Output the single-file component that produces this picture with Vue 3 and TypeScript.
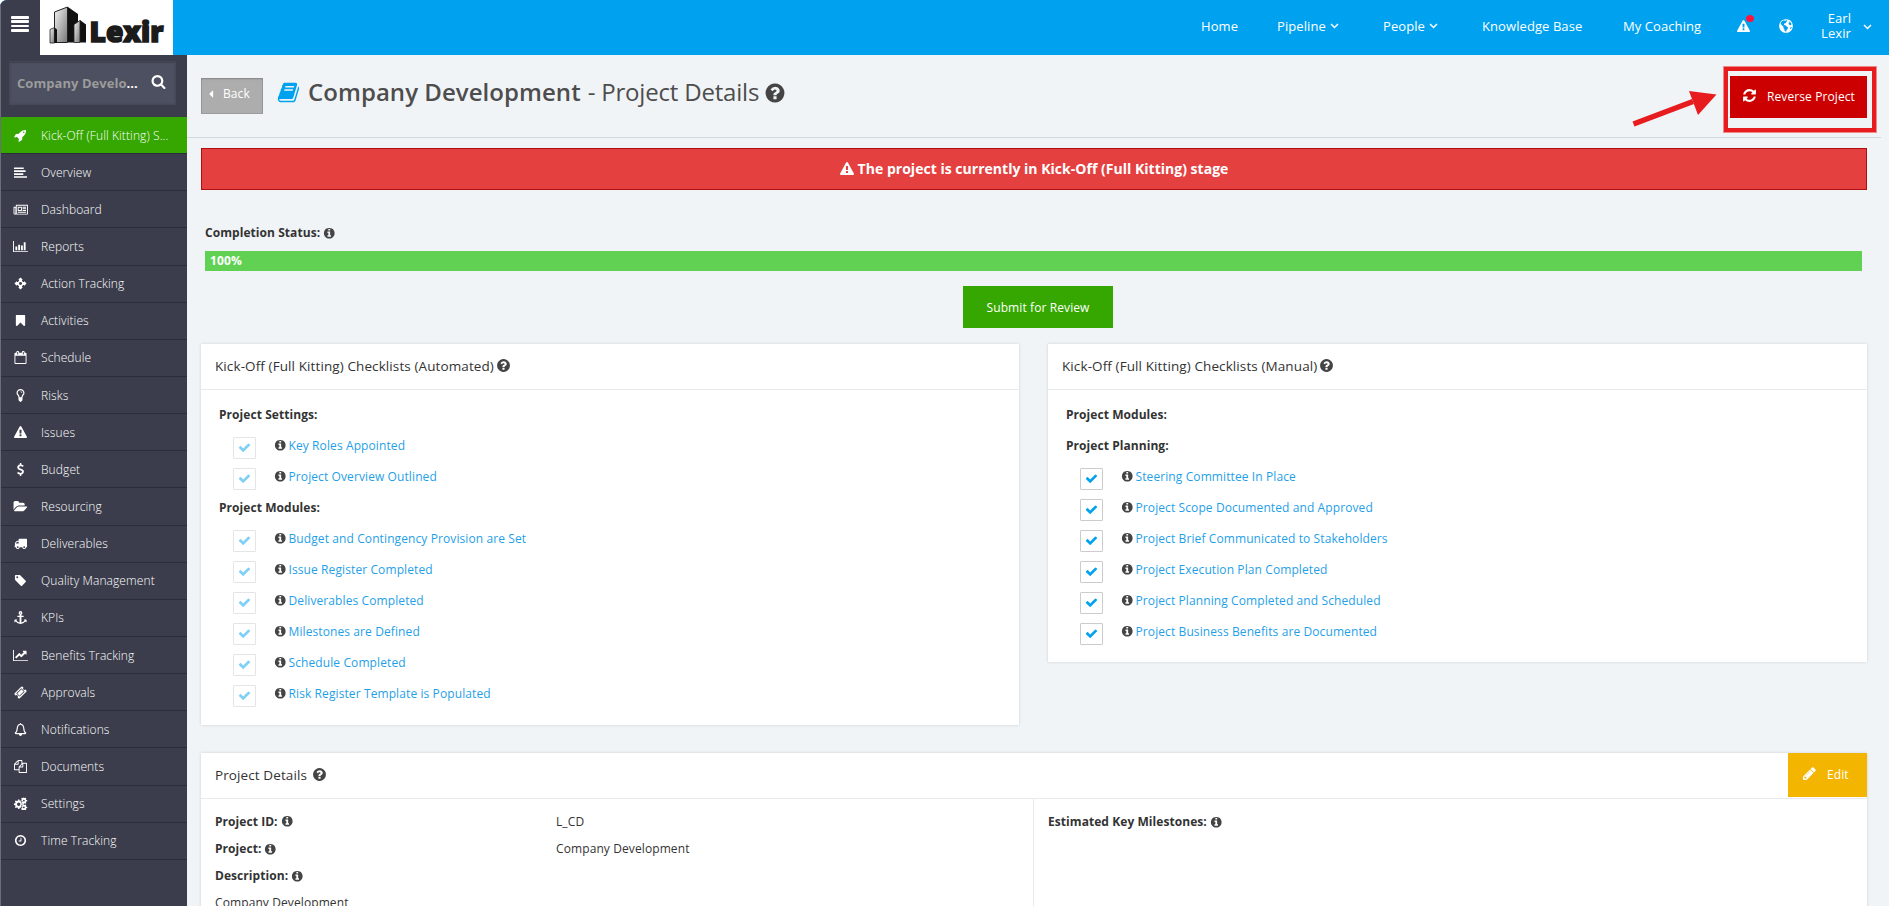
<script setup lang="ts">
interface NavEntry { label: string; icon: string; active?: boolean }
interface CheckItem { heading?: boolean; label: string }

const circle = 'M1664 896q0 209-103 385.5t-279.5 279.5-385.5 103-385.5-103-279.5-279.5-103-385.5 103-385.5 279.5-279.5 385.5-103 385.5 103 279.5 279.5 103 385.5z'

const icons: Record<string, string> = {
  check: 'M1671 566q0 40-28 68l-724 724-136 136q-28 28-68 28t-68-28l-136-136-362-362q-28-28-28-68t28-68l136-136q28-28 68-28t68 28l294 295 656-657q28-28 68-28t68 28l136 136q28 28 28 68z',
  info: 'M1152 1376v-160q0-14-9-23t-23-9h-96v-512q0-14-9-23t-23-9h-320q-14 0-23 9t-9 23v160q0 14 9 23t23 9h96v320h-96q-14 0-23 9t-9 23v160q0 14 9 23t23 9h448q14 0 23-9t9-23zm-128-896v-160q0-14-9-23t-23-9h-192q-14 0-23 9t-9 23v160q0 14 9 23t23 9h192q14 0 23-9t9-23z' + circle,
  question: 'M1024 1376v-192q0-14-9-23t-23-9h-192q-14 0-23 9t-9 23v192q0 14 9 23t23 9h192q14 0 23-9t9-23zm256-672q0-88-55.5-163t-138.5-116-170-41q-243 0-371 213-15 24 8 42l132 100q7 6 19 6 16 0 25-12 53-68 86-92 34-24 86-24 48 0 85.5 26t37.5 59q0 38-20 61t-68 45q-63 28-115.5 86.5t-52.5 125.5v36q0 14 9 23t23 9h192q14 0 23-9t9-23q0-19 21.5-49.5t54.5-49.5q32-18 49-28.5t46-35 44.5-48 28-60.5 12.5-81z' + circle,
  warning: 'M1024 1375v-190q0-14-9.5-23.5t-22.5-9.5h-192q-13 0-22.5 9.5t-9.5 23.5v190q0 14 9.5 23.5t22.5 9.5h192q13 0 22.5-9.5t9.5-23.5zm-2-374l18-459q0-12-10-19-13-11-24-11h-220q-11 0-24 11-10 7-10 21l17 457q0 10 10 16.5t24 6.5h185q14 0 23.5-6.5t10.5-16.5zm-14-934l768 1408q35 63-2 126-17 29-46.5 46t-63.5 17h-1536q-34 0-63.5-17t-46.5-46q-37-63-2-126l768-1408q17-31 47-49t65-18 65 18 47 49z',
  refresh: 'M1639 1056q0 5-1 7-64 268-268 434.5t-478 166.5q-146 0-282.5-55t-243.5-157l-129 129q-19 19-45 19t-45-19-19-45v-448q0-26 19-45t45-19h448q26 0 45 19t19 45-19 45l-137 137q71 66 161 102t187 36q134 0 250-65t186-179q11-17 53-117 8-23 30-23h192q13 0 22.5 9.5t9.5 22.5zm25-800v448q0 26-19 45t-45 19h-448q-26 0-45-19t-19-45 19-45l138-138q-148-137-349-137-134 0-250 65t-186 179q-11 17-53 117-8 23-30 23h-199q-13 0-22.5-9.5t-9.5-22.5v-7q65-268 270-434.5t480-166.5q146 0 284 55.5t245 156.5l130-129q19-19 45-19t45 19 19 45z',
  search: 'M1216 832q0-185-131.5-316.5t-316.5-131.5-316.5 131.5-131.5 316.5 131.5 316.5 316.5 131.5 316.5-131.5 131.5-316.5zm512 832q0 52-38 90t-90 38q-54 0-90-38l-343-342q-179 124-399 124-143 0-273.5-55.5t-225-150-150-225-55.5-273.5 55.5-273.5 150-225 225-150 273.5-55.5 273.5 55.5 225 150 150 225 55.5 273.5q0 220-124 399l343 343q37 37 37 90z',
  pencil: 'M491 1536l91-91-235-235-91 91v107h128v128h107zm523-928q0-22-22-22-10 0-17 7l-542 542q-7 7-7 17 0 22 22 22 10 0 17-7l542-542q7-7 7-17zm-54-192l416 416-832 832h-416v-416zm683 96q0 53-37 90l-166 166-416-416 166-165q36-38 90-38 53 0 91 38l235 234q37 39 37 91z',
  book: 'M1703 478q40 57 18 129l-275 906q-19 64-76.5 107.5t-122.5 43.5h-923q-77 0-148.5-53.5t-99.5-131.5q-24-67-2-127 0-4 3-27t4-37q1-8-3-21.5t-3-19.5q2-11 8-21t16.5-23.5 16.5-23.5q23-38 45-91.5t30-91.5q3-10 .5-30t-.5-28q3-11 17-28t17-23q21-36 42-92t25-90q1-9-2.5-32t.5-28q4-13 22-30.5t22-22.5q19-26 42.5-84.5t27.5-96.5q1-8-3-25.5t-2-26.5q2-8 9-18t18-23 17-21q8-12 16.5-30.5t15-35 16-36 19.5-32 26.5-23.5 36-11.5 47.5 5.5l-1 3q38-9 51-9h761q74 0 114 56t18 130l-274 906q-36 119-71.5 153.5t-128.5 34.5h-869q-27 0-38 15-11 16-1 43 24 70 144 70h923q29 0 56-15.5t35-41.5l300-987q7-22 5-57 38 15 59 43zm-1064 2q-4 13 2 22.5t20 9.5h608q13 0 25.5-9.5t16.5-22.5l21-64q4-13-2-22.5t-20-9.5h-608q-13 0-25.5 9.5t-16.5 22.5zm-83 256q-4 13 2 22.5t20 9.5h608q13 0 25.5-9.5t16.5-22.5l21-64q4-13-2-22.5t-20-9.5h-608q-13 0-25.5 9.5t-16.5 22.5z',
  rocket: 'M1440 448q0-40-28-68t-68-28-68 28-28 68 28 68 68 28 68-28 28-68zm224-288q0 249-75.5 430.5t-253.5 360.5q-81 80-195 176l-20 379q-2 16-16 26l-384 224q-7 4-16 4-12 0-23-9l-64-64q-13-14-8-32l85-276-281-281-276 85q-3 1-9 1-14 0-23-9l-64-64q-17-19-5-39l224-384q10-14 26-16l379-20q96-114 176-195 188-187 358-258t431-71q14 0 24 9.5t10 22.5z',
  align: 'M0 200h1344v230h-1344zM0 600h1600v230h-1600zM0 1000h1280v230h-1280zM0 1400h1792v230h-1792z',
  news: 'M256 256h1664v1216q0 128-128 128h-1664q-192 0-192-192v-896h320zM384 384v1088h1408v-1088zM64 640v736q0 96 64 96t64-96v-736zM512 512h576v576h-576zM640 640v320h320v-320zM1184 512h480v128h-480zM1184 736h480v128h-480zM1184 960h480v128h-480zM512 1216h1152v128h-1152z',
  bars: 'M-128 128h128v1408h1920v128h-2048zM192 896h256v512h-256zM576 640h256v768h-256zM960 768h256v640h-256zM1344 320h256v1088h-256z',
  crosshairs: 'M896 64l330 330h-120v150q100 40 142 142h150v-120l330 330-330 330v-120h-150q-42 102-142 142v150h120l-330 330-330-330h120v-150q-100-40-142-142h-150v120l-330-330 330-330v120h150q42-102 142-142v-150h-120zM896 690q-206 0-206 206t206 206 206-206-206-206z',
  bookmark: 'M1420 128q23 0 44 9 33 13 52.500 41t19.500 62v1289q0 34-19.500 62t-52.500 41q-19 8-44 8-48 0-83-32l-441-424-441 424q-36 33-83 33-23 0-44-9-33-13-52.500-41t-19.500-62v-1289q0-34 19.500-62t52.500-41q21-9 44-9z',
  calendar: 'M192 1664h1408v-1024h-1408zM576 448v-288q0-32-32-32h-64q-32 0-32 32v288q0 32 32 32h64q32 0 32-32zM1344 448v-288q0-32-32-32h-64q-32 0-32 32v288q0 32 32 32h64q32 0 32-32zM1728 384v1280q0 128-128 128h-1408q-128 0-128-128v-1280q0-128 128-128h128v-96q0-160 160-160h64q160 0 160 160v96h384v-96q0-160 160-160h64q160 0 160 160v96h128q128 0 128 128z',
  bulb: 'M896 0q-240 0-395 160t-155 380q0 170 115 300 125 140 140 300 5 50 30 80-50 60 0 140-50 70 10 140-20 130 110 150 50 142 145 142t145-142q130-20 110-150 60-70 10-140 50-80 0-140 25-30 30-80 15-160 140-300 115-130 115-300 0-220-155-380t-395-160zM896 170q170 0 275 105t105 265q0 110-80 200-150 170-180 400h-240q-30-230-180-400-80-90-80-200 0-160 105-265t275-105zM896 320v80q130 0 150 140h90q-20-210-240-220z',
  dollar: 'M1362 1185q0 153-99.5 263.5t-258.5 136.5v175q0 14-9 23t-23 9h-135q-13 0-22.5-9.5t-9.5-22.5v-175q-66-9-127.5-31t-101.5-44.5-74-48-46.5-37.5-17.5-18q-17-21-2-41l103-135q7-10 23-12 15-2 24 9l2 2q113 99 243 125 37 8 74 8 81 0 142.5-43t61.5-122q0-28-15-53t-33.5-42-58.5-37.5-66-32-80-32.5q-39-16-61.5-25t-61.5-26.5-62.5-31-56.5-35.5-53.5-42.5-43.5-49-35.5-58-21-66.5-8.500-78q0-138 98-242t255-134v-180q0-13 9.500-22.500t22.500-9.500h135q14 0 23 9t9 23v176q57 6 110.500 23t87 33.500 63.500 37.500 39 29 15 14q17 18 5 38l-81 146q-8 15-23 16-14 3-27-7-3-3-14.500-12t-39-26.500-58.500-32-74.500-26-85.500-11.500q-95 0-155 43t-60 111q0 26 8.500 48t29.500 41.500 39.500 33 56 31 60.500 27 70 27.500q53 20 81 31.500t76 35 75.500 42.500 62 50 53 63.500 31.500 76.500 13 94z',
  folder: 'M1815 952q0 31-31 66l-336 396q-43 51-120.5 86.5t-143.5 35.5h-1088q-34 0-60.5-13t-26.5-43q0-31 31-66l336-396q43-51 120.5-86.5t143.5-35.5h1088q34 0 60.5 13t26.5 43zm-343-344v160h-832q-94 0-197 47.5t-164 119.5l-337 396-5 6q0-4-.5-12.5t-.5-12.5v-960q0-92 66-158t158-66h320q92 0 158 66t66 158v32h544q92 0 158 66t66 158z',
  truck: 'M640 1408q0-52-38-90t-90-38-90 38-38 90 38 90 90 38 90-38 38-90zm-384-512h384v-256h-158q-13 0-22 9l-195 195q-9 9-9 22v30zm1280 512q0-52-38-90t-90-38-90 38-38 90 38 90 90 38 90-38 38-90zm256-1088v1024q0 15-4 26.5t-13.5 18.5-16.5 11.5-23.5 6-22.5 2-25.5 0-22.5-.5q0 106-75 181t-181 75-181-75-75-181h-384q0 106-75 181t-181 75-181-75-75-181h-64q-3 0-22.5.5t-25.5 0-22.5-2-23.5-6-16.5-11.5-13.5-18.5-4-26.5q0-26 19-45t45-19v-320q0-8-.5-35t0-38 2.5-34.5 6.5-37 14-30.5 22.5-30l198-198q19-19 50.5-32t58.5-13h160v-192q0-26 19-45t45-19h1024q26 0 45 19t19 45z',
  tag: 'M576 448q0-53-37.5-90.5t-90.5-37.5-90.5 37.5-37.5 90.5 37.5 90.5 90.5 37.5 90.5-37.5 37.5-90.5zm1067 576q0 53-37 90l-491 492q-39 37-91 37-53 0-90-37l-715-716q-38-37-64.5-101t-26.5-117v-416q0-52 38-90t90-38h416q53 0 117 26.5t102 64.5l715 714q37 39 37 91z',
  anchor: 'M896 192q-70 0-70 70t70 70 70-70-70-70zM896 0q256 0 256 262 0 150-128 220v158h256q64 0 64 64v64q0 64-64 64h-256v740q270-40 440-220l-96-96q-50-50 20-80h280q64 0 64 64v280q-20 70-80 20l-90-90q-250 320-666 342-416-22-666-342l-90 90q-60 50-80-20v-280q0-64 64-64h280q70 30 20 80l-96 96q170 180 440 220v-740h-256q-64 0-64-64v-64q0-64 64-64h256v-158q-128-70-128-220 0-262 256-262z',
  line: 'M-128 128h128v1408h1920v128h-2048zM1728 300v440q-20 60-80 20l-120-120-500 500q-24 20-48 0l-240-240-420 420-190-190 580-580q24-20 48 0l240 240 340-350-120-110q-40-60 20-90h430q60 0 60 60z',
  ticket: 'M1024 452l316 316-572 572-316-316zM812 1430l618-617q19-19 19-45t-19-45l-362-362q-18-18-45-18t-45 18l-618 617q-19 19-19 45t19 45l362 362q18 18 45 18t45-18zM1702 794l-907 908q-37 37-90.5 37t-90.5-37l-126-126q56-56 56-136t-56-136-136-56-136 56l-125-126q-37-37-37-90.5t37-90.5l907-906q37-37 90.5-37t90.5 37l125 125q-56 56-56 136t56 136 136 56 136-56l126 125q37 37 37 90.5t-37 90.5z',
  bell: 'M896 0q80 0 80 90 360 70 420 460 20 570 300 800 10 130-128 186h-448q-20 224-224 240-204-16-224-240h-448q-138-56-128-186 280-230 300-800 60-390 420-460 0-90 80-90zM896 240q-300 0-350 350-20 550-230 800h1160q-210-250-230-800-50-350-350-350z',
  files: 'M1696 384q40 0 68 28t28 68v1216q0 40-28 68t-68 28h-960q-40 0-68-28t-28-68v-288h-544q-40 0-68-28t-28-68v-672q0-40 20-88t48-76l408-408q28-28 76-48t88-20h416q40 0 68 28t28 68v328q68-40 128-40zm-544 213l-299 299h299zm-640-384l-299 299h299zm196 647l316-316v-416h-384v416q0 40-28 68t-68 28h-416v640h512v-256q0-40 20-88t48-76zm956 804v-1152h-384v416q0 40-28 68t-68 28h-416v640z',
  cogs: 'M560 340h180l36 170 130 54 146-94 126 126-94 146 54 130 170 36v180l-170 36-54 130 94 146-126 126-146-94-130 54-36 170h-180l-36-170-130-54-146 94-126-126 94-146-54-130-170-36v-180l170-36 54-130-94-146 126-126 146 94 130-54zM650 770q-228 0-228 228t228 228 228-228-228-228zM1340 60l110 90 140-60 100 90-50 130 60 100 130 30v140l-130 30-60 100 50 130-100 90-140-60-110 90-110-90-140 60-80-90 50-130-50-100-110-30v-140l110-30 50-100-50-130 80-90 140 60zM1360 370q-120 0-120 125t120 125 125-125-125-125zM1340 1010l110 90 140-60 100 90-50 130 60 100 130 30v140l-130 30-60 100 50 110-100 60-140-60-110 80-110-80-140 60-80-60 50-110-50-100-110-30v-140l110-30 50-100-50-130 80-90 140 60zM1360 1300q-120 0-120 125t120 125 125-125-125-125z',
  clock: 'M1024 544v448q0 14-9 23t-23 9h-320q-14 0-23-9t-9-23v-64q0-14 9-23t23-9h224v-352q0-14 9-23t23-9h64q14 0 23 9t9 23zm416 352q0-148-73-273t-198-198-273-73-273 73-198 198-73 273 73 273 198 198 273 73 273-73 198-198 73-273z' + circle,
  globe: 'M640 260l180 60 150-70 90 70-120 110-60 120-180 60-40 150 120 40 130 30 70 150 150 50-40 170-120 130-60 220-160-90-40-200-110-130 10-170-170-120-110-170-40-110q70-190 350-300zM1230 370l220 170 60 200-110 60-180-60-40-160 100-90zM1440 980l100 40-110 210-100-60z' + circle,
  caret: 'M1216 448v896q0 26-19 45t-45 19-45-19l-448-448q-19-19-19-45t19-45l448-448q19-19 45-19t45 19 19 45z',
  chevron: 'M1 3l3.500 3.500L8 3',
}

const menu: NavEntry[] = [
  { label: 'Kick-Off (Full Kitting) S...', icon: 'rocket', active: true },
  { label: 'Overview', icon: 'align' },
  { label: 'Dashboard', icon: 'news' },
  { label: 'Reports', icon: 'bars' },
  { label: 'Action Tracking', icon: 'crosshairs' },
  { label: 'Activities', icon: 'bookmark' },
  { label: 'Schedule', icon: 'calendar' },
  { label: 'Risks', icon: 'bulb' },
  { label: 'Issues', icon: 'warning' },
  { label: 'Budget', icon: 'dollar' },
  { label: 'Resourcing', icon: 'folder' },
  { label: 'Deliverables', icon: 'truck' },
  { label: 'Quality Management', icon: 'tag' },
  { label: 'KPIs', icon: 'anchor' },
  { label: 'Benefits Tracking', icon: 'line' },
  { label: 'Approvals', icon: 'ticket' },
  { label: 'Notifications', icon: 'bell' },
  { label: 'Documents', icon: 'files' },
  { label: 'Settings', icon: 'cogs' },
  { label: 'Time Tracking', icon: 'clock' },
]

const automated: CheckItem[] = [
  { heading: true, label: 'Project Settings:' },
  { label: 'Key Roles Appointed' },
  { label: 'Project Overview Outlined' },
  { heading: true, label: 'Project Modules:' },
  { label: 'Budget and Contingency Provision are Set' },
  { label: 'Issue Register Completed' },
  { label: 'Deliverables Completed' },
  { label: 'Milestones are Defined' },
  { label: 'Schedule Completed' },
  { label: 'Risk Register Template is Populated' },
]

const manual: CheckItem[] = [
  { heading: true, label: 'Project Modules:' },
  { heading: true, label: 'Project Planning:' },
  { label: 'Steering Committee In Place' },
  { label: 'Project Scope Documented and Approved' },
  { label: 'Project Brief Communicated to Stakeholders' },
  { label: 'Project Execution Plan Completed' },
  { label: 'Project Planning Completed and Scheduled' },
  { label: 'Project Business Benefits are Documented' },
]

const checklists = [
  { title: 'Kick-Off (Full Kitting) Checklists (Automated)', items: automated, locked: true },
  { title: 'Kick-Off (Full Kitting) Checklists (Manual)', items: manual, locked: false },
]

const details = [
  { label: 'Project ID:', value: 'L_CD' },
  { label: 'Project:', value: 'Company Development' },
  { label: 'Description:', value: '' },
]

const progress = 100
</script>

<template>
  <div class="page">
    <header class="topbar">
      <div class="burger"><i></i><i></i><i></i><i></i></div>
      <svg class="logo" viewBox="0 0 133 55">
        <defs>
          <linearGradient id="steel" x1="0" y1="0" x2="1" y2="1">
            <stop offset="0" stop-color="#f4f4f4" />
            <stop offset="1" stop-color="#777" />
          </linearGradient>
        </defs>
        <path d="M28 7l10 7v28.500H28z" fill="#111" />
        <path d="M14.500 12l13-5v35.500h-13z" fill="url(#steel)" stroke="#222" stroke-width="1" />
        <path d="M40 20l6 4.500v18h-6z" fill="#111" />
        <path d="M34 24.500l6-4v22h-6z" fill="url(#steel)" stroke="#222" stroke-width=".8" />
        <path d="M10 29.500l4.500-2v15.500h-4.500z" fill="url(#steel)" stroke="#222" stroke-width=".8" />
        <path d="M14.500 27.500l2.500 2v13.500h-2.500z" fill="#111" />
        <text x="49.500" y="42" textLength="74" lengthAdjust="spacingAndGlyphs" class="brand">Lexir</text>
      </svg>
      <nav class="nav">
        <span>Home</span>
        <span>Pipeline<svg class="chev" viewBox="0 0 9 9"><path :d="icons.chevron" /></svg></span>
        <span>People<svg class="chev" viewBox="0 0 9 9"><path :d="icons.chevron" /></svg></span>
        <span>Knowledge Base</span>
        <span>My Coaching</span>
        <span class="alert"><svg viewBox="0 0 1792 1792"><path fill-rule="evenodd" :d="icons.warning" /></svg><b></b></span>
        <span class="world"><svg viewBox="0 0 1792 1792"><path fill-rule="evenodd" :d="icons.globe" /></svg></span>
        <span class="user">Earl<br />Lexir</span>
        <span><svg class="chev last" viewBox="0 0 9 9"><path :d="icons.chevron" /></svg></span>
      </nav>
    </header>

    <div class="body">
      <aside class="sidebar">
        <div class="search">
          <span>Company Develo<em>...</em></span>
          <svg viewBox="0 0 1792 1792"><path fill-rule="evenodd" :d="icons.search" /></svg>
        </div>
        <ul class="menu">
          <li v-for="m in menu" :key="m.label" :class="{ active: m.active }">
            <svg viewBox="-128 0 2048 1792"><path fill-rule="evenodd" :d="icons[m.icon]" /></svg>
            <span>{{ m.label }}</span>
          </li>
        </ul>
      </aside>

      <main class="main">
        <div class="heading">
          <div class="back"><svg viewBox="0 0 1792 1792"><path :d="icons.caret" /></svg><span>Back</span></div>
          <svg class="book" viewBox="0 0 1792 1792"><path fill-rule="evenodd" :d="icons.book" /></svg>
          <h1><b>Company Development</b><span>- Project Details</span></h1>
          <svg class="help" viewBox="0 0 1792 1792"><path fill-rule="evenodd" :d="icons.question" /></svg>
          <div class="reverse">
            <svg viewBox="0 0 1792 1792"><path :d="icons.refresh" /></svg><span>Reverse Project</span>
            <div class="frame"></div>
            <svg class="arrow" viewBox="0 0 90 44"><path d="M4.500 39L64 16.500" stroke="#e71c1e" stroke-width="5.500" fill="none" /><path d="M60 6l27.500 3.500L69 30z" fill="#e71c1e" /></svg>
          </div>
        </div>

        <div class="banner">
          <svg viewBox="0 0 1792 1792"><path fill-rule="evenodd" :d="icons.warning" /></svg>
          <span>The project is currently in Kick-Off (Full Kitting) stage</span>
        </div>

        <div class="status">
          <div class="label">Completion Status:<svg class="inf" viewBox="0 0 1792 1792"><path fill-rule="evenodd" :d="icons.info" /></svg></div>
          <div class="track"><div class="fill" :style="{ width: progress + '%' }">{{ progress }}%</div></div>
          <div class="submit"><span>Submit for Review</span></div>
        </div>

        <div class="lists">
          <section v-for="c in checklists" :key="c.title" class="card" :class="{ locked: c.locked }">
            <div class="card-head">
              <span>{{ c.title }}</span>
              <svg viewBox="0 0 1792 1792"><path fill-rule="evenodd" :d="icons.question" /></svg>
            </div>
            <div class="card-body">
              <template v-for="i in c.items" :key="i.label">
                <div v-if="i.heading" class="group">{{ i.label }}</div>
                <div v-else class="item">
                  <span class="box"><svg viewBox="0 0 1792 1792"><path :d="icons.check" /></svg></span>
                  <svg class="inf" viewBox="0 0 1792 1792"><path fill-rule="evenodd" :d="icons.info" /></svg>
                  <a>{{ i.label }}</a>
                </div>
              </template>
            </div>
          </section>
        </div>

        <section class="card details">
          <div class="card-head">
            <span>Project Details</span>
            <svg viewBox="0 0 1792 1792"><path fill-rule="evenodd" :d="icons.question" /></svg>
            <div class="edit"><svg viewBox="0 0 1792 1792"><path fill-rule="evenodd" :d="icons.pencil" /></svg><span>Edit</span></div>
          </div>
          <div class="cols">
            <div class="fields">
              <div v-for="d in details" :key="d.label" class="field">
                <div class="label">{{ d.label }}<svg class="inf" viewBox="0 0 1792 1792"><path fill-rule="evenodd" :d="icons.info" /></svg></div>
                <div>{{ d.value }}</div>
              </div>
              <div class="field"><div>Company Development</div></div>
            </div>
            <div class="miles">
              <div class="label">Estimated Key Milestones:<svg class="inf" viewBox="0 0 1792 1792"><path fill-rule="evenodd" :d="icons.info" /></svg></div>
            </div>
          </div>
        </section>
      </main>
    </div>
  </div>
</template>

<style>
body { background: #fff; overflow: hidden; }
</style>

<style scoped>
* { box-sizing: border-box; }
.page { width: 1889px; height: 906px; overflow: hidden; background: #f1f4f7; font: 12px/20px "Open Sans", sans-serif; letter-spacing: .1px; color: #333; border-top-left-radius: 7px; }
svg { display: block; fill: currentColor; flex: none; }

.topbar { display: flex; height: 55px; background: #00a2ef; color: #fff; }
.burger { width: 40px; background: #3b3d4c; padding: 16px 10px 0; border-left: 1px solid #6b6d78; }
.burger i { display: block; height: 2.500px; width: 18px; margin-bottom: 1.900px; background: #fff; border-radius: 1px; }
.logo { width: 133px; height: 55px; background: #fff; }
.brand { font: 800 29px "Open Sans", sans-serif; letter-spacing: 0; fill: #1b1b1b; stroke: #1b1b1b; stroke-width: 1.6px; }
.nav { display: grid; grid-template-columns: 76px 106px 99px 141px 114px 42px 40px 32px 31px; margin-left: 1028px; align-items: center; height: 52px; white-space: nowrap; font-size: 13px; letter-spacing: .08px; }
.nav > span { display: flex; align-items: center; }
.chev { width: 9px; height: 9px; margin-left: 4px; margin-top: -1px; fill: none; stroke: #fff; stroke-width: 1.5px; }
.nav .chev.last { margin-left: 12px; margin-top: 1px; }
.alert { position: relative; }
.alert svg { width: 13px; height: 13px; }
.alert b { position: absolute; left: 9px; top: -5px; width: 8px; height: 7px; border-radius: 50%; background: #fb1440; }
.world svg { width: 16px; height: 16px; margin-left: -1px; margin-top: -1px; }
.nav .user { display: block; text-align: right; line-height: 15px; }

.body { display: flex; height: 851px; }
.sidebar { width: 187px; background: #3b3d4c; border-left: 1px solid #6b6d78; flex: none; color: #fff; }
.search { margin: 6px 11px 12px 8px; height: 44px; background: #4d5060; box-shadow: inset 0 0 2px 1px #454756, inset 0 2px 1px #3f4150; display: flex; align-items: center; justify-content: space-between; padding: 0 10px 0 8px; font-weight: 700; font-size: 13px; letter-spacing: .05px; color: #9b9b9b; }
.search em { color: #fff; font-style: normal; }
.search svg { width: 15px; height: 15px; color: #fff; margin-top: -3px; }
.menu { list-style: none; margin: 0; padding: 0; }
.menu li { display: flex; align-items: center; height: 37.150px; border-bottom: 1px solid #2b2d3c; font-weight: 300; white-space: nowrap; }
.menu li.active { background: #35a700; }
.menu span { padding-top: 1px; }
.menu svg { width: 15px; height: 13px; margin: 0 13px 0 12px; }

.main { width: 1702px; }
.heading { display: flex; width: 1694px; height: 83px; border-bottom: 1px solid #d0d9e2; padding-left: 14px; }
.back { display: flex; align-items: center; width: 62px; height: 36px; margin-top: 23px; background: #adadad; box-shadow: inset 0 1px 2px #888, inset 0 0 0 1px #9c9c9c; color: #fff; padding: 0 0 5px 4px; }
.back svg { width: 12px; height: 12px; margin-right: 6px; }
.book { width: 23px; height: 23px; color: #00a2ef; margin: 26px 0 0 14px; }
h1 { margin: 20px 0 0 8px; font-size: 24px; line-height: 34px; font-weight: 400; letter-spacing: 0; color: #4d4d4d; white-space: nowrap; display: flex; gap: 7px; }
h1 b { font-weight: 600; letter-spacing: .05px; }
h1 span { letter-spacing: -.2px; }
.help { width: 22px; height: 22px; margin: 27px 0 0 5px; color: #444; }
.reverse { position: relative; display: flex; align-items: center; width: 137px; height: 42px; margin: 21px 14px 0 auto; background: #cc0000; color: #fff; padding: 0 0 0 12px; white-space: nowrap; }
.reverse > svg:first-child { width: 15px; height: 15px; margin: -3px 10px 0 0; }
.frame { position: absolute; left: -7px; top: -10px; width: 154px; height: 67px; border: 5px solid #e71c1e; outline: 1px solid #ef8a8c; outline-offset: -1px; }
.arrow { position: absolute; left: -101px; top: 9px; width: 90px; height: 44px; }

.banner { display: flex; align-items: center; justify-content: center; gap: 4px; margin: 10px 0 0 14px; width: 1666px; height: 42px; background: #e44040; border: 1px solid #ae1012; color: #fff; font-weight: 700; font-size: 14px; letter-spacing: .02px; padding-bottom: 1px; }
.banner svg { width: 14px; height: 14px; }
.label { display: flex; align-items: center; font-weight: 700; letter-spacing: .06px; white-space: nowrap; }
.inf { width: 12.500px; height: 12.500px; color: #444; }
.label .inf { margin-left: 3px; }
.status { margin: 33px 0 0 18px; width: 1657px; }
.track { height: 20px; margin-top: 8px; }
.fill { height: 20px; background: #61d154; color: #fff; font-weight: 700; padding-left: 5px; line-height: 19px; }
.submit { display: flex; align-items: center; justify-content: center; width: 150px; height: 42px; margin: 15px 0 0 758px; background: #35a700; color: #fff; padding-top: 1px; }

.lists { display: flex; align-items: flex-start; gap: 29px; margin: 16px 0 0 14px; }
.card { background: #fff; width: 819px; box-shadow: 0 0 3px rgba(0, 0, 0, .14); padding-bottom: 14px; }
.card.locked { width: 818px; padding-bottom: 15px; }
.card-head { display: flex; align-items: center; height: 46px; border-bottom: 1px solid #e8ebec; padding: 0 0 2px 14px; font-weight: 500; font-size: 13.500px; letter-spacing: .1px; }
.card-head > svg { width: 15px; height: 15px; margin-left: 2px; color: #444; }
.card-body { padding: 9px 0 0 18px; }
.group { height: 31px; line-height: 30px; font-weight: 700; letter-spacing: .06px; }
.group:first-child { height: 32px; line-height: 31px; }
.item { display: flex; align-items: center; height: 31px; padding-left: 14px; }
.box { width: 23px; height: 22px; border: 1px solid #ccc; margin: 2px 18px 0 0; border-radius: 1px; color: #00a2ef; padding: 3.500px 4px; }
.box svg { width: 13px; height: 13px; }
.locked .box { opacity: .5; }
.item .inf { margin-bottom: 3px; }
.item a { color: #1f9fe8; margin: 0 0 1px 2px; }

.details { width: 1666px; height: 200px; margin: 28px 0 0 14px; }
.details .card-head { padding-bottom: 2px; }
.details .card-head > svg { margin-left: 5px; }
.edit { display: flex; align-items: center; align-self: flex-start; width: 79px; height: 44px; margin-left: auto; background: #f3b500; color: #fff; padding-left: 14px; font-size: 12px; }
.edit svg { width: 15px; height: 15px; margin-right: 10px; margin-top: -3px; }
.cols { display: flex; height: 154px; }
.fields { width: 833px; border-right: 1px solid #e8ebec; padding: 9px 0 0 14px; }
.field { display: grid; grid-template-columns: 341px 1fr; align-items: center; height: 27.200px; }
.miles { padding: 13px 0 0 14px; }
</style>
